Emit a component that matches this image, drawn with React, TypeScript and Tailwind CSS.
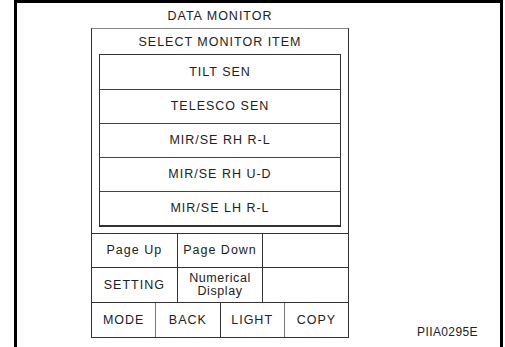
const font = { fontFamily: '"Liberation Sans", Arial, sans-serif' };

const items = ['TILT SEN', 'TELESCO SEN', 'MIR/SE RH R-L', 'MIR/SE RH U-D', 'MIR/SE LH R-L'];

const Cell = ({ children, className = '' }: { children?: React.ReactNode; className?: string }) => (
    <div className={`flex-1 flex items-center justify-center text-center ${className}`}>{children}</div>
);

export default function App() {
    return (
        <div className="w-[505px] h-[347px] overflow-hidden bg-white text-[#222] text-[12.5px] tracking-[1px]" style={font}>
            <div className="ml-[14px] w-[489px] h-[360px] border-t-[3px] border-x-[3px] border-black flex">
                <div className="ml-[74px] w-[258px] flex flex-col">
                    {/* header */}
                    <div className="h-[25px] pt-[2px] flex items-center justify-center leading-none">DATA MONITOR</div>

                    <div className="border border-[#333] border-t-[#888]">
                        <div className="h-[25px] pt-[1px] flex items-center justify-center leading-none">SELECT MONITOR ITEM</div>

                        {/* item list */}
                        <div className="mx-[7px] border-t border-x border-b-2 border-[#333]">
                            {items.map((item, i) => (
                                <div
                                    key={item}
                                    className={`h-[34px] flex items-center justify-center leading-none ${i > 0 ? 'border-t border-[#444]' : ''}`}
                                >
                                    {item}
                                </div>
                            ))}
                        </div>

                        {/* buttons */}
                        <div className="mt-[6px] border-t border-[#333]">
                            <div className="h-[34px] flex border-b border-[#333] leading-none">
                                <Cell>Page Up</Cell>
                                <Cell className="border-l border-[#333]">Page Down</Cell>
                                <Cell className="border-l border-[#333]" />
                            </div>
                            <div className="h-[35px] flex border-b border-[#333] leading-none">
                                <Cell>SETTING</Cell>
                                <Cell className="border-l border-[#333] leading-[13px] tracking-[0.6px]">
                                    Numerical<br />Display
                                </Cell>
                                <Cell className="border-l border-[#333]" />
                            </div>
                            <div className="h-[34px] flex leading-none">
                                <Cell>MODE</Cell>
                                <Cell className="border-l border-[#777]">BACK</Cell>
                                <Cell className="border-l border-[#333]">LIGHT</Cell>
                                <Cell className="border-l border-[#777]">COPY</Cell>
                            </div>
                        </div>
                    </div>
                </div>

                <div className="flex-1 flex flex-col justify-end items-end pr-[22px] pb-[22px]">
                    <div className="text-[12px] tracking-[0.4px] leading-none">PIIA0295E</div>
                </div>
            </div>
        </div>
    );
}
